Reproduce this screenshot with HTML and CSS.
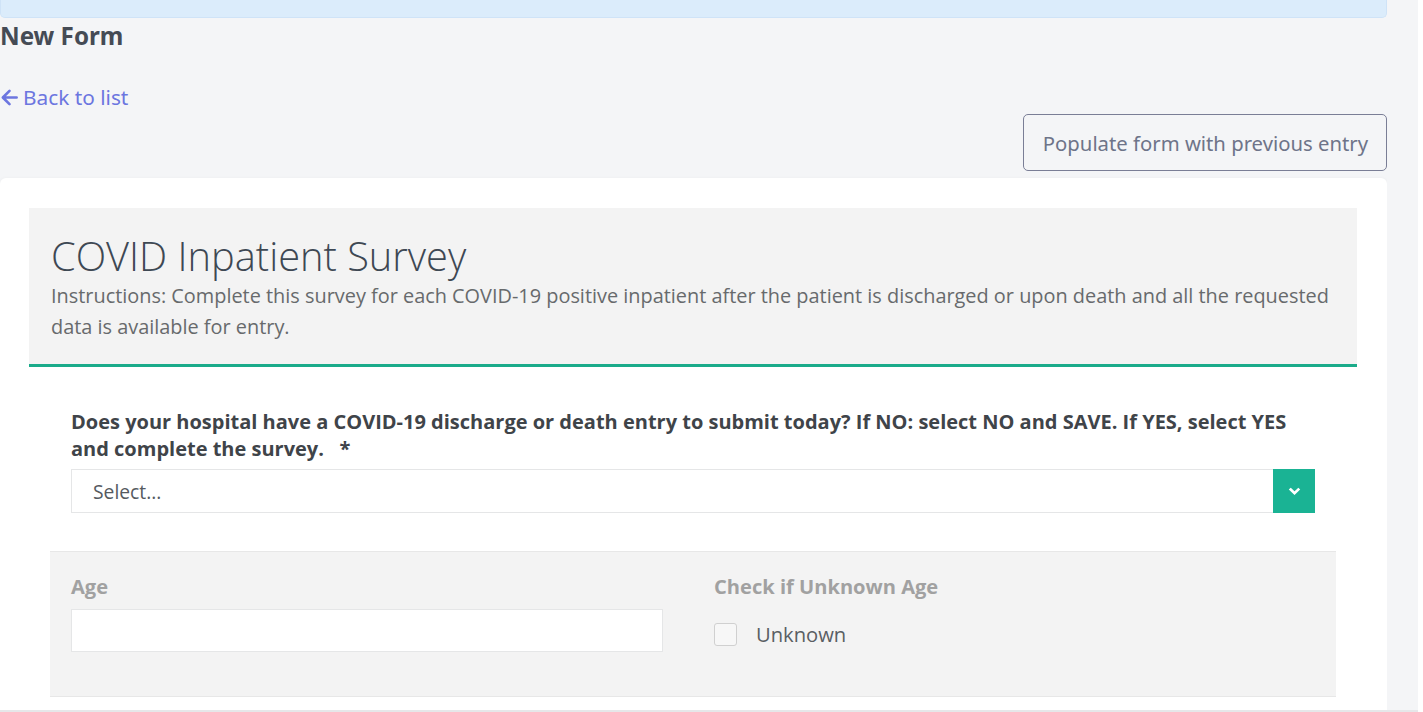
FILE: index.html
```html
<!DOCTYPE html>
<html lang="en">
<head>
<meta charset="utf-8">
<title>New Form</title>
<link rel="stylesheet" href="styles.css">
</head>
<body>
<div class="page">
  <div class="main">
    <div class="alert-bar"></div>
    <h1 class="page-title">New Form</h1>
    <a class="back-link" href="#">
      <svg class="back-icon" viewBox="0 0 20 20" width="19" height="19" aria-hidden="true">
        <path d="M17.5 10H3.5 M10 3L3 10L10 17" fill="none" stroke="currentColor" stroke-width="2.8" stroke-linecap="round" stroke-linejoin="round"/>
      </svg>
      <span>Back to list</span>
    </a>
    <div class="actions">
      <button class="btn-outline" type="button">Populate form with previous entry</button>
    </div>
    <div class="card">
      <div class="survey-header">
        <h2 class="survey-title">COVID Inpatient Survey</h2>
        <p class="survey-desc">Instructions: Complete this survey for each COVID-19 positive inpatient after the patient is discharged or upon death and all the requested data is available for entry.</p>
      </div>
      <div class="question">
        <label class="question-label">Does your hospital have a COVID-19 discharge or death entry to submit today? If NO: select NO and SAVE. If YES, select YES and complete the survey. &nbsp;&nbsp;*</label>
        <div class="select">
          <span class="select-text">Select...</span>
          <span class="select-btn">
            <svg viewBox="0 0 12 12" width="13" height="13" aria-hidden="true">
              <path d="M2.5 4.2L6 7.6L9.5 4.2" fill="none" stroke="#fff" stroke-width="2.5" stroke-linecap="square"/>
            </svg>
          </span>
        </div>
      </div>
      <div class="panel">
        <div class="panel-col">
          <div class="panel-label">Age</div>
          <input class="text-input" type="text">
        </div>
        <div class="panel-col">
          <div class="panel-label">Check if Unknown Age</div>
          <label class="check">
            <span class="check-box"></span>
            <span class="check-text">Unknown</span>
          </label>
        </div>
      </div>
    </div>
  </div>
  <div class="scroll-strip"></div>
</div>
</body>
</html>
```

FILE: styles.css
```css
html, body {
  margin: 0;
  padding: 0;
  background: #ffffff;
}
body {
  font-family: "Open Sans", "Liberation Sans", sans-serif;
  overflow: hidden;
}
.page {
  display: flex;
  width: 1418px;
  height: 710px;
  background: #f4f5f7;
  border-bottom: 2px solid #e6e7e9;
  overflow: hidden;
}
.main {
  width: 1387px;
  flex: none;
}
.scroll-strip {
  flex: 1;
  background: #f4f5f7;
}
.alert-bar {
  height: 18px;
  background: #dbecfb;
  border: 1px solid #cfe3f7;
  border-top: none;
  border-radius: 0 0 5px 5px;
  box-sizing: border-box;
}
.page-title {
  margin: 4px 0 0;
  font-family: "Noto Sans", "Open Sans", sans-serif;
  font-weight: 700;
  font-size: 24.2px;
  line-height: 28px;
  color: #454b55;
}
.back-link {
  display: flex;
  align-items: center;
  gap: 4px;
  margin-top: 33px;
  font-family: "Noto Sans", sans-serif;
  font-size: 20.8px;
  line-height: 28px;
  color: #6c76e0;
  text-decoration: none;
  width: max-content;
}
.back-icon {
  color: #6c76e0;
}
.actions {
  display: flex;
  justify-content: flex-end;
  margin-top: 3px;
}
.btn-outline {
  height: 57px;
  padding: 0 18px 0 19px;
  background: transparent;
  border: 1px solid #7a7e96;
  border-radius: 5px;
  font-family: "Noto Sans", sans-serif;
  font-size: 20.3px;
  color: #6e7489;
}
.card {
  margin-top: 7px;
  background: #ffffff;
  border-radius: 6px;
  box-shadow: 0 1px 4px rgba(0,0,0,0.06);
  padding: 30px 30px 40px 29px;
  height: 600px;
}
.survey-header {
  background: #f3f3f3;
  border-bottom: 3px solid #1bab8a;
  padding: 24px 22px 22px;
}
.survey-title {
  margin: 0;
  font-family: "Open Sans", sans-serif;
  font-weight: 300;
  font-size: 39.8px;
  line-height: 48px;
  color: #3e4853;
}
.survey-desc {
  margin: 0;
  font-size: 19.9px;
  line-height: 31px;
  color: #676a6c;
}
.question {
  padding: 41px 42px 0;
}
.question-label {
  display: block;
  font-weight: 700;
  font-size: 20px;
  line-height: 27px;
  color: #3f4449;
  padding-right: 14px;
  white-space: pre-line;
}
.select {
  display: flex;
  height: 44px;
  margin-top: 7px;
  border: 1px solid #e5e6e7;
  box-sizing: border-box;
  background: #fff;
}
.select-text {
  flex: 1;
  display: flex;
  align-items: center;
  padding-left: 21px;
  font-size: 19.3px;
  color: #555a5f;
}
.select-btn {
  width: 42px;
  display: flex;
  align-items: center;
  justify-content: center;
  background: #1ab394;
  margin: -1px -1px -1px 0;
}
.panel {
  display: grid;
  grid-template-columns: 643px 1fr;
  margin: 38px 21px 0;
  background: #f3f3f3;
  border-top: 1px solid #e7e7e7;
  border-bottom: 1px solid #e7e7e7;
  height: 146px;
  box-sizing: border-box;
  padding: 20px 21px 0;
}
.panel-label {
  font-weight: 700;
  font-size: 20.1px;
  line-height: 30px;
  color: #a1a1a1;
}
.text-input {
  display: block;
  width: 592px;
  height: 43px;
  margin-top: 7px;
  border: 1px solid #e5e6e7;
  box-sizing: border-box;
  background: #fff;
}
.check {
  display: flex;
  align-items: center;
  gap: 19px;
  margin-top: 18px;
}
.check-box {
  width: 23px;
  height: 23px;
  border: 1px solid #d0d0d0;
  border-radius: 3px;
  background: #f7f7f7;
  box-sizing: border-box;
}
.check-text {
  font-size: 20.2px;
  color: #5a5e63;
}
```
